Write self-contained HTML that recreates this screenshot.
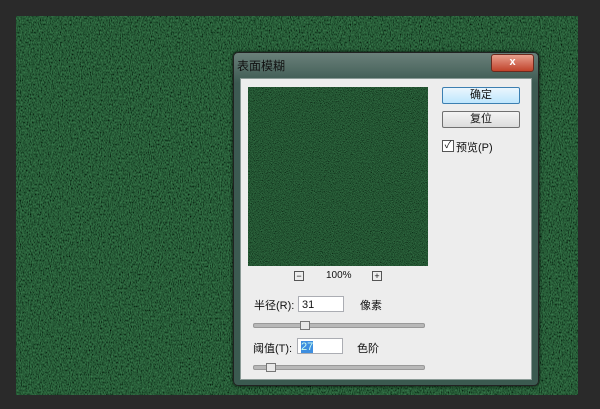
<!DOCTYPE html>
<html><head><meta charset="utf-8"><style>
body{margin:0;width:600px;height:409px;background:#2a2a2a;position:relative;overflow:hidden;font-family:"Liberation Sans","Noto Sans CJK SC",sans-serif;font-size:11px;color:#111}
.abs{position:absolute}
.btn{position:absolute;left:442px;width:76px;height:15px;border:1px solid #707070;border-radius:2px;background:linear-gradient(#f4f4f4,#dcdcdc);text-align:center;line-height:15px;font-size:11px}
.inp{position:absolute;width:46px;height:16px;background:#fff;border:1px solid #abadb3;line-height:16px;padding-left:3px;box-sizing:border-box}
.track{position:absolute;left:253px;width:170px;height:3px;background:#b8b8b8;border:1px solid #999;border-radius:2px}
.thumb{position:absolute;width:8px;height:7px;background:#e8e8e8;border:1px solid #777}
</style></head><body>
<svg class="abs" style="left:16px;top:16px" width="562" height="379">
<defs><filter id="g" x="0" y="0" width="100%" height="100%"><feTurbulence type="fractalNoise" baseFrequency="0.9 0.5" numOctaves="2" seed="3"/><feColorMatrix values="0.2 0 0 0 -0.05  0.9 0 0 0 -0.2  0.35 0 0 0 -0.08  0 0 0 0 1"/></filter></defs>
<rect width="562" height="379" fill="#0c2813"/>
<rect width="562" height="379" filter="url(#g)" opacity="0.55"/>
</svg>
<div class="abs" style="left:233px;top:52px;width:304px;height:332px;background:linear-gradient(#6a807a,#3d5a52 30px,#3b5a50);border:1px solid #222;border-radius:5px;box-shadow:0 0 3px #000"></div>
<div class="abs" style="left:237px;top:57px;color:#111;font-size:12px">表面模糊</div>
<div class="abs" style="left:491px;top:54px;width:41px;height:16px;background:linear-gradient(#e9a08e,#c0432b);border:1px solid #6b2a1e;border-radius:3px;color:#fff;text-align:center;font-weight:bold;font-size:11px;line-height:15px">x</div>
<div class="abs" style="left:240px;top:78px;width:290px;height:300px;background:#ededed;border:1px solid #8a9a96"></div>
<svg class="abs" style="left:248px;top:87px" width="180" height="179">
<defs><filter id="g2" x="0" y="0" width="100%" height="100%"><feTurbulence type="fractalNoise" baseFrequency="1.1" numOctaves="2" seed="7"/><feColorMatrix values="0.2 0 0 0 -0.05  0.9 0 0 0 -0.2  0.35 0 0 0 -0.08  0 0 0 0 1"/></filter></defs>
<rect width="180" height="179" fill="#0a2410"/>
<rect width="180" height="179" filter="url(#g2)" opacity="0.5"/>
</svg>
<div class="btn" style="top:87px;border-color:#3c7fb1;background:linear-gradient(#eaf6fd,#bee6fd)">确定</div>
<div class="btn" style="top:111px">复位</div>
<div class="abs" style="left:442px;top:140px;width:10px;height:10px;border:1px solid #555;background:#fff;font-size:10px;line-height:10px;text-align:center">✓</div>
<div class="abs" style="left:456px;top:139px;font-size:11px">预览(P)</div>
<div class="abs" style="left:294px;top:271px;width:8px;height:8px;border:1px solid #555;font-size:9px;line-height:8px;text-align:center">−</div>
<div class="abs" style="left:326px;top:270px;font-size:10px">100%</div>
<div class="abs" style="left:372px;top:271px;width:8px;height:8px;border:1px solid #555;font-size:9px;line-height:8px;text-align:center">+</div>
<div class="abs" style="left:254px;top:297px">半径(R):</div>
<div class="inp" style="left:298px;top:296px">31</div>
<div class="abs" style="left:360px;top:297px">像素</div>
<div class="track" style="top:323px"></div>
<div class="thumb" style="left:300px;top:321px"></div>
<div class="abs" style="left:253px;top:340px">阈值(T):</div>
<div class="inp" style="left:297px;top:338px"><span style="background:#3d8ee0;color:#cfe">27</span></div>
<div class="abs" style="left:357px;top:340px">色阶</div>
<div class="track" style="top:365px"></div>
<div class="thumb" style="left:266px;top:363px"></div>
</body></html>
